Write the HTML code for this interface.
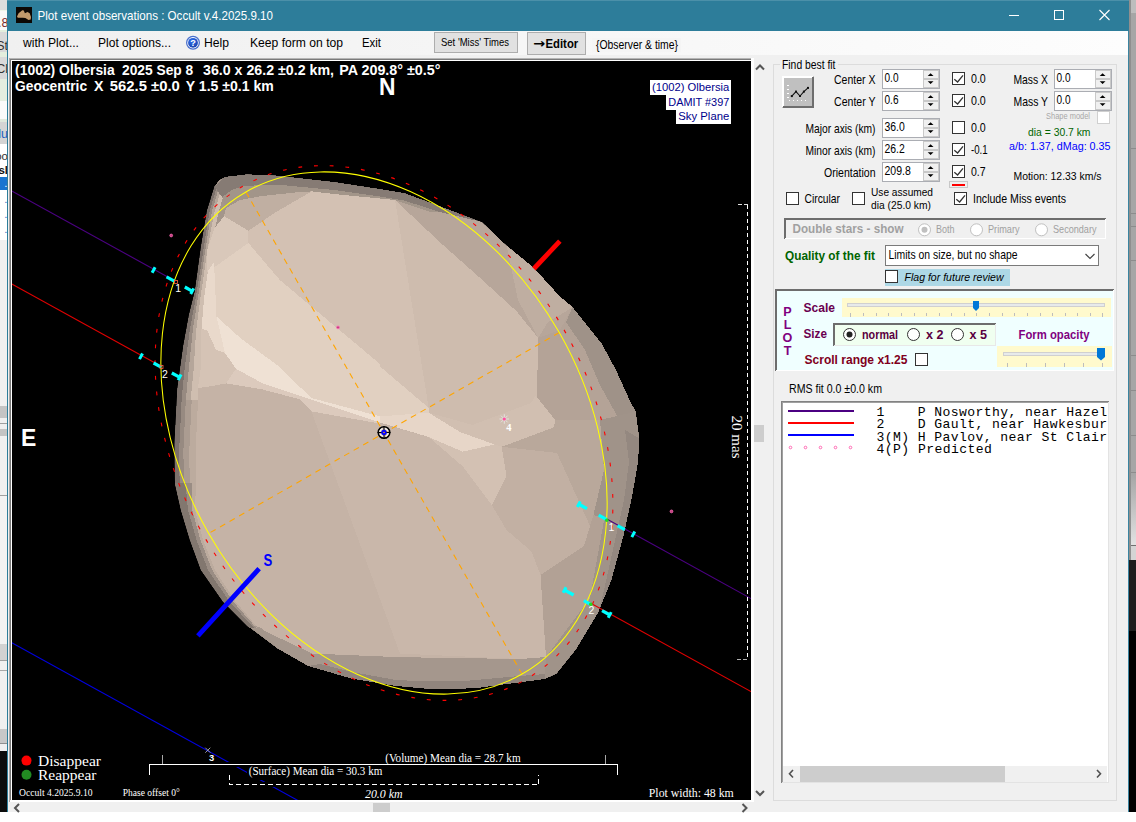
<!DOCTYPE html>
<html lang="en"><head><meta charset="utf-8"><title>Plot event observations : Occult v.4.2025.9.10</title>
<style>
html,body{margin:0;padding:0;background:#fff;overflow:hidden}
body{width:1136px;height:822px;position:relative;font-family:"Liberation Sans",sans-serif}
svg{position:absolute;left:0;top:0;display:block}
text{white-space:pre}
.c{shape-rendering:crispEdges}
</style></head><body>
<svg width="1136" height="822" viewBox="0 0 1136 822">
<rect x="0" y="0" width="1136" height="822" fill="#ffffff" class="c"/>
<rect x="0" y="0" width="8" height="812" fill="#e6e6e6" class="c"/>
<rect x="0" y="0" width="8" height="10" fill="#dddddd" class="c"/>
<rect x="0" y="10" width="8" height="1" fill="#eef5ea" class="c"/>
<rect x="0" y="11" width="8" height="19" fill="#f8f8f8" class="c"/>
<rect x="0" y="30" width="8" height="2" fill="#e3eedd" class="c"/>
<rect x="0" y="32" width="8" height="20" fill="#d9d9d9" class="c"/>
<rect x="0" y="52" width="8" height="5" fill="#e3eedd" class="c"/>
<rect x="0" y="57" width="8" height="22" fill="#d9d9d9" class="c"/>
<rect x="0" y="79" width="8" height="22" fill="#e4ede0" class="c"/>
<rect x="0" y="101" width="8" height="18" fill="#fafafa" class="c"/>
<rect x="0" y="119" width="8" height="3" fill="#dfe8dc" class="c"/>
<rect x="0" y="122" width="8" height="22" fill="#d4d4d4" class="c"/>
<rect x="0" y="144" width="8" height="33" fill="#ffffff" class="c"/>
<rect x="0" y="177" width="8" height="13" fill="#1874d0" class="c"/>
<rect x="0" y="190" width="8" height="50" fill="#ffffff" class="c"/>
<rect x="0" y="240" width="8" height="166" fill="#f0f0f0" class="c"/>
<rect x="0" y="406" width="8" height="12" fill="#c4c4c4" class="c"/>
<rect x="0" y="418" width="8" height="5" fill="#f0f0f0" class="c"/>
<rect x="0" y="423" width="8" height="1" fill="#a0a0a0" class="c"/>
<rect x="0" y="424" width="8" height="5" fill="#f0f0f0" class="c"/>
<rect x="0" y="429" width="8" height="7" fill="#c4c4c4" class="c"/>
<rect x="0" y="436" width="8" height="59" fill="#f0f0f0" class="c"/>
<rect x="0" y="495" width="8" height="1" fill="#a0a0a0" class="c"/>
<rect x="0" y="496" width="8" height="148" fill="#f2f2f2" class="c"/>
<rect x="0" y="644" width="8" height="16" fill="#d2d2d2" class="c"/>
<rect x="0" y="660" width="8" height="1" fill="#a0a0a0" class="c"/>
<rect x="0" y="661" width="8" height="9" fill="#f0f0f0" class="c"/>
<rect x="0" y="670" width="8" height="1" fill="#a8a8a8" class="c"/>
<rect x="0" y="671" width="8" height="58" fill="#f0f0f0" class="c"/>
<rect x="0" y="729" width="8" height="14" fill="#c8c8c8" class="c"/>
<rect x="0" y="743" width="8" height="1" fill="#909090" class="c"/>
<rect x="0" y="744" width="8" height="7" fill="#f0f0f0" class="c"/>
<rect x="0" y="751" width="8" height="61" fill="#0c0c0c" class="c"/>
<defs><clipPath id="lsclip"><rect x="0" y="0" width="7" height="812"/></clipPath></defs>
<g clip-path="url(#lsclip)">
<text x="8.5" y="27" font-size="12.5" fill="#7a2a2a" font-family='"Liberation Sans", sans-serif' text-anchor="end"  xml:space="preserve">3.8</text>
<text x="8" y="50" font-size="12.5" fill="#333" font-family='"Liberation Sans", sans-serif' text-anchor="end"  xml:space="preserve">St</text>
<text x="8" y="73" font-size="12.5" fill="#333" font-family='"Liberation Sans", sans-serif' text-anchor="end"  xml:space="preserve">Cl</text>
<text x="8" y="138" font-size="12.5" fill="#2060c0" font-family='"Liberation Sans", sans-serif' text-anchor="end"  xml:space="preserve">lu</text>
<text x="8" y="160" font-size="11.5" fill="#333" font-family='"Liberation Sans", sans-serif' text-anchor="end"  xml:space="preserve">oo</text>
<text x="8" y="174" font-size="11.5" fill="#111" font-family='"Liberation Sans", sans-serif' font-weight="bold" text-anchor="end"  xml:space="preserve">sl</text>
<text x="7.5" y="187" font-size="11.5" fill="#ffffff" font-family='"Liberation Sans", sans-serif' text-anchor="end"  xml:space="preserve">.</text>
<text x="7.5" y="203" font-size="11.5" fill="#3a6fc0" font-family='"Liberation Sans", sans-serif' text-anchor="end"  xml:space="preserve">.</text>
<text x="7.5" y="218" font-size="11.5" fill="#3a6fc0" font-family='"Liberation Sans", sans-serif' text-anchor="end"  xml:space="preserve">.</text>
<text x="7.5" y="233" font-size="11.5" fill="#3a6fc0" font-family='"Liberation Sans", sans-serif' text-anchor="end"  xml:space="preserve">.</text>
</g>
<defs><linearGradient id="rsg" x1="0" y1="0" x2="0" y2="1"><stop offset="0" stop-color="#a6a6a6"/><stop offset="1" stop-color="#e2e2e2"/></linearGradient><linearGradient id="msg" x1="0" y1="0" x2="1" y2="0"><stop offset="0" stop-color="#f0f0f0"/><stop offset="1" stop-color="#fdfdfd"/></linearGradient></defs>
<rect x="1128" y="0" width="8" height="475" fill="#a6a6a6" class="c"/>
<rect x="1128" y="0" width="8" height="13" fill="#bdbdbd" class="c"/>
<rect x="1128" y="475" width="8" height="70" fill="url(#rsg)" class="c"/>
<rect x="1128" y="545" width="8" height="1" fill="#707070" class="c"/>
<rect x="1128" y="546" width="8" height="14" fill="#d4d4d4" class="c"/>
<rect x="1128" y="560" width="8" height="71" fill="#1e1e1e" class="c"/>
<rect x="1128" y="631" width="8" height="181" fill="#000000" class="c"/>
<rect x="1129" y="148" width="7" height="1" fill="#8c8c8c" class="c"/>
<rect x="1129" y="213" width="7" height="1" fill="#8c8c8c" class="c"/>
<rect x="1129" y="226" width="7" height="1" fill="#8c8c8c" class="c"/>
<rect x="1129" y="260" width="7" height="1" fill="#8c8c8c" class="c"/>
<rect x="1129" y="355" width="7" height="1" fill="#8c8c8c" class="c"/>
<rect x="1129" y="390" width="7" height="1" fill="#8c8c8c" class="c"/>
<rect x="1129" y="435" width="7" height="1" fill="#8c8c8c" class="c"/>
<rect x="1129" y="472" width="7" height="1" fill="#8c8c8c" class="c"/>
<rect x="1129" y="0" width="2" height="560" fill="#8f8f8f" class="c"/>
<rect x="7" y="0" width="1121" height="812" fill="#f0f0f0" class="c"/>
<rect x="7" y="0" width="1122" height="31" fill="#2d7d9a" class="c"/>
<rect x="7" y="0" width="1122" height="1" fill="#4b90a9" class="c"/>
<rect x="7" y="31" width="1" height="781" fill="#2d7d9a" class="c"/>
<rect x="1128" y="31" width="1" height="781" fill="#3b84a0" class="c"/>
<rect x="8" y="31" width="1120" height="24" fill="url(#msg)" class="c"/>
<rect x="16" y="7" width="16" height="16" fill="#0c0804" class="c"/>
<path d="M17,16.4 L18.6,13.2 L22.3,10.3 L23.8,10.6 L24.9,13.2 L27.5,11.9 L29.7,13.2 L31,16.9 L30.7,19.5 L28.6,20.1 L25.4,18 L22.8,17.7 L20.1,17.7 L17.8,17.7 Z" fill="#c29b6c"/>
<text x="37.5" y="20" font-size="12.8" fill="#ffffff" font-family='"Liberation Sans", sans-serif' textLength="235.5" lengthAdjust="spacingAndGlyphs"  xml:space="preserve">Plot event observations : Occult v.4.2025.9.10</text>
<line x1="1009" y1="15.5" x2="1019" y2="15.5" stroke="#ffffff" stroke-width="1" class="c"/>
<rect x="1054.5" y="10.5" width="9" height="9" fill="none" stroke="#ffffff" stroke-width="1" class="c"/>
<path d="M1099.5,10 L1109.5,20 M1109.5,10 L1099.5,20" stroke="#ffffff" stroke-width="1.1" fill="none"/>
<text x="23" y="46.8" font-size="13.1" fill="#000" font-family='"Liberation Sans", sans-serif' textLength="56" lengthAdjust="spacingAndGlyphs"  xml:space="preserve">with Plot...</text>
<text x="98" y="46.8" font-size="13.1" fill="#000" font-family='"Liberation Sans", sans-serif' textLength="73" lengthAdjust="spacingAndGlyphs"  xml:space="preserve">Plot options...</text>
<defs><radialGradient id="hg" cx="0.4" cy="0.3" r="0.8"><stop offset="0" stop-color="#2f6fee"/><stop offset="1" stop-color="#1a3fa6"/></radialGradient></defs>
<circle cx="193" cy="42.8" r="7" fill="#4a70cc"/>
<circle cx="193" cy="42.8" r="5.7" fill="#ffffff"/>
<circle cx="193" cy="42.8" r="4.9" fill="url(#hg)"/>
<text x="193" y="46.3" font-size="9.2" fill="#ffffff" font-family='"Liberation Sans", sans-serif' font-weight="bold" text-anchor="middle"  xml:space="preserve">?</text>
<text x="204" y="46.8" font-size="13.1" fill="#000" font-family='"Liberation Sans", sans-serif' textLength="25" lengthAdjust="spacingAndGlyphs"  xml:space="preserve">Help</text>
<text x="250" y="46.8" font-size="13.1" fill="#000" font-family='"Liberation Sans", sans-serif' textLength="93" lengthAdjust="spacingAndGlyphs"  xml:space="preserve">Keep form on top</text>
<text x="362" y="46.8" font-size="13.1" fill="#000" font-family='"Liberation Sans", sans-serif' textLength="19" lengthAdjust="spacingAndGlyphs"  xml:space="preserve">Exit</text>
<rect x="434.5" y="32.5" width="83" height="20" fill="#e1e1e1" stroke="#adadad" stroke-width="1" class="c"/>
<text x="441" y="46" font-size="10.2" fill="#000" font-family='"Liberation Sans", sans-serif' textLength="68" lengthAdjust="spacingAndGlyphs"  xml:space="preserve">Set &#x27;Miss&#x27; Times</text>
<rect x="527.5" y="32.5" width="58" height="22" fill="#e1e1e1" stroke="#adadad" stroke-width="1" class="c"/>
<text y="48" font-size="13.4" font-weight="bold" fill="#000" font-family='"Liberation Sans", sans-serif'><tspan x="533" font-family='"DejaVu Sans", sans-serif' font-size="13" textLength="12" lengthAdjust="spacingAndGlyphs">→</tspan><tspan x="545.5" textLength="32.7" lengthAdjust="spacingAndGlyphs">Editor</tspan></text>
<rect x="592" y="38" width="89" height="14" fill="#f5f5f5" class="c"/>
<text x="596" y="48.5" font-size="12.6" fill="#000" font-family='"Liberation Sans", sans-serif' textLength="82" lengthAdjust="spacingAndGlyphs"  xml:space="preserve">{Observer &amp; time}</text>
<rect x="9" y="58" width="745" height="1" fill="#b4b4b4" class="c"/>
<rect x="9" y="59" width="745" height="1" fill="#7a7a7a" class="c"/>
<rect x="9" y="58" width="1" height="744" fill="#a8a8a8" class="c"/>
<rect x="10" y="59" width="1" height="743" fill="#7a7a7a" class="c"/>
<rect x="11" y="60" width="743" height="742" fill="#ffffff" class="c"/>
<rect x="12" y="61" width="739" height="739" fill="#000000" class="c"/>
<rect x="751" y="58" width="3" height="744" fill="#ffffff" class="c"/>
<rect x="10" y="800" width="744" height="2" fill="#ffffff" class="c"/>
<rect x="754" y="60" width="17" height="742" fill="#f0f0f0" class="c"/>
<rect x="754" y="425" width="10" height="17" fill="#cdcdcd" class="c"/>
<path d="M756,69.5 L760,65.5 L764,69.5" stroke="#555" stroke-width="2" fill="none"/>
<path d="M756,791 L760,795 L764,791" stroke="#555" stroke-width="2" fill="none"/>
<rect x="8" y="802" width="746" height="10" fill="#f0f0f0" class="c"/>
<rect x="373" y="803" width="17" height="9" fill="#cdcdcd" class="c"/>
<path d="M19,804 L15,808 L19,812" stroke="#555" stroke-width="2" fill="none"/>
<path d="M742.5,804 L746.5,808 L742.5,812" stroke="#555" stroke-width="2" fill="none"/>
<defs><clipPath id="plotclip"><rect x="12" y="61" width="739" height="739"/></clipPath></defs>
<g clip-path="url(#plotclip)">
<defs><clipPath id="silclip"><polygon points="214.5,186.5 219,180 225.4,176.8 247,174.3 276,175.5 334.4,182 380,189 404.3,193 440.8,206.5 482.2,222.3 506.5,245.4 533.3,267.3 560,296.5 572.5,307 601.7,343.5 616,370 629.6,400 635.7,411.6 639.4,438.4 638,462.7 632,496.8 623.5,535.7 611.4,580 598,613 576,649.5 556.5,673.8 545,679 522.5,682 473.8,688.4 430,689 396,686 352,678.7 308,666 276.5,648 247.3,626 223,601.6 201,570 190,540 181,510 175,483.5 174.5,444.6 177.4,388.7 183.5,345 189,315 195,291 201,247 207,211"/></clipPath></defs>
<g clip-path="url(#silclip)">
<polygon points="214.5,186.5 219,180 225.4,176.8 247,174.3 276,175.5 334.4,182 380,189 404.3,193 440.8,206.5 482.2,222.3 506.5,245.4 533.3,267.3 560,296.5 572.5,307 601.7,343.5 616,370 629.6,400 635.7,411.6 639.4,438.4 638,462.7 632,496.8 623.5,535.7 611.4,580 598,613 576,649.5 556.5,673.8 545,679 522.5,682 473.8,688.4 430,689 396,686 352,678.7 308,666 276.5,648 247.3,626 223,601.6 201,570 190,540 181,510 175,483.5 174.5,444.6 177.4,388.7 183.5,345 189,315 195,291 201,247 207,211" fill="#a4968b" class="c" />
<polygon points="211.1,186.5 203.4,211 200.9,231 197.7,256 195.0,271 190.3,297 182.0,330 173.7,369 170.7,400 168.1,450 168.7,483 176.8,510 186.1,540 196.8,570 219.4,601 247.6,628 251.8,628 225.6,601 204.1,570 192.9,540 184.1,510 179.6,483 179.2,450 181.6,400 184.6,369 189.8,330 195.9,297 200.2,271 202.5,256 206.3,231 209.6,211 217.0,186.5" fill="#7c716b" class="c" />
<polygon points="217.0,186.5 209.6,211 206.3,231 202.5,256 200.2,271 195.9,297 189.8,330 184.6,369 181.6,400 179.2,450 179.6,483 184.1,510 192.9,540 204.1,570 225.6,601 251.8,628 253.4,628 228.0,601 206.9,570 195.5,540 186.9,510 183.8,483 183.4,450 185.8,400 188.8,369 192.8,330 198.0,297 202.2,271 204.4,256 208.3,231 212.0,211 219.3,186.5" fill="#978a81" class="c" />
<polygon points="219.3,186.5 212.0,211 208.3,231 204.4,256 202.2,271 198.0,297 192.8,330 188.8,369 185.8,400 190.7,400 193.7,369 196.2,330 200.5,297 204.4,271 206.5,256 210.7,231 214.8,211 222.0,186.5" fill="#b5a69a" class="c" />
<polygon points="222.0,186.5 214.8,211 210.7,231 206.5,256 204.4,271 200.5,297 196.2,330 193.7,369 190.7,400 198.0,400 201.0,369 201.5,330 204.2,297 207.9,271 209.7,256 214.3,231 219.0,211 226.0,186.5" fill="#cfbeb0" class="c" />
<polygon points="185.8,400 183.4,450 183.8,483 186.9,510 195.5,540 206.9,570 228.0,601 253.4,628 255.6,628 231.4,601 210.8,570 199.1,540 190.8,510 189.7,483 189.3,450 191.7,400" fill="#ab9c91" class="c" />
<polygon points="191.7,400 189.3,450 189.7,483 190.8,510 199.1,540 210.8,570 231.4,601 255.6,628 258.0,628 235.0,601 215.0,570 203.0,540 195.0,510 196.0,483 195.7,450 198.0,400" fill="#bcab9e" class="c" />
<polygon points="168.7,483 176.8,510 186.1,540 196.8,570 219.4,601 247.6,628 254.0,628 229.0,601 208.0,570 196.5,540 188.0,510 185.5,483" fill="#82776f" class="c" />
<polygon points="185.5,483 188.0,510 196.5,540 208.0,570 229.0,601 254.0,628 256.4,628 232.6,601 212.2,570 200.4,540 192.2,510 191.8,483" fill="#9a8d84" class="c" />
<polygon points="214.5,186.5 225.4,176.8 247,174.3 276,175.5 334.4,182 380,189 404.3,193 440.8,206.5 482,222 470,222 440,212 404,200.5 380,196.5 334,190 276,184.5 243,186 232,190 222,197" fill="#867b74" class="c" />
<polygon points="222,197 232,190 243,186 276,184.5 334,190 380,196.5 404,200.5 440,212 430,212 395,200 334,194 300,192 262,196 240,200 226,208" fill="#a29589" class="c" />
<polygon points="226,208 240,200 262,196 300,192 311.7,191.4 276,212 248.4,230.8 224,216.2" fill="#c0afa2" class="c" />
<polygon points="224,216.2 248.4,230.8 248.4,243 207.3,272.2 207,250.3 214.3,228.4" fill="#d9c8ba" class="c" />
<polygon points="311.7,191.4 334,194 395,200 428.7,407.9 380,366.5 380,364 279.8,280 248.4,243 248.4,230.8 276,212" fill="#d3c1b3" class="c" />
<polygon points="395,200 440.8,243 484.6,282 516.3,311 538.2,337.9 536.9,398.2 530.9,403 472.5,424.9 428.7,412.7 428.7,407.9" fill="#cebcae" class="c" />
<polygon points="395,200 430,212 440,212 482,222 506.5,245.4 533.3,267.3 560,296.5 572.5,307 560,330 538.2,337.9 516.3,311 484.6,282 440.8,243" fill="#b7a69a" class="c" />
<polygon points="506.5,245.4 533.3,267.3 560,296.5 572.5,307 565,312 548,322 538.2,337.9 518,300" fill="#bfaea1" class="c" />
<polygon points="207.3,272.2 248.4,243 279.8,280 380,364 380,366.5 428.7,407.9 428.7,412.7 380,416.4 311.4,398 277.3,365.2 240.8,338.4 216.5,316.5 201.5,330 204.2,296.8 207.9,271.2" fill="#e1d0c1" class="c" />
<polygon points="207.9,271.2 214,262 216.5,316.5 225,353 216,350 203,340 201.3,331 204.2,296.8" fill="#e9d9cb" class="c" />
<polygon points="216.5,316.5 240.8,338.4 277.3,365.2 311.4,398 380,416.4 428.7,412.7 460.3,432.2 494.4,444.4 462.7,451.7 428.7,437 380,422.5 316.3,401.2 262.7,383.4 236,368.8 225,353" fill="#efe1d4" class="c" />
<polygon points="380,416.4 428.7,412.7 460.3,432.2 494.4,444.4 462.7,451.7 428.7,437 380,422.5" fill="#e7d6c8" class="c" />
<polygon points="201,345 201.5,329 207,330 216,350 225,353 236,368.8 226.2,383.4 206.8,387 198,388 200.5,370" fill="#d5c3b5" class="c" />
<polygon points="236,368.8 262.7,383.4 316.3,401.2 380,422.5 380,423.6 311.4,411.4 299.2,399.2 262.7,389.5 226.2,383.4" fill="#dccabd" class="c" />
<polygon points="198,388 206.8,387 226.2,383.4 262.7,389.5 299.2,399.2 311.4,411.4 380,423.6 380,422.5 428.7,437 462.7,466.3 492,505.2 506.5,530 531.4,551.4 540.5,575 546,657 520,659 400,657.2 312.5,653.6 258,628 235,601 215,570 203,540 195,510 196,483 195.7,450 198,400" fill="#c5b3a6" class="c" />
<polygon points="311.4,411.4 380,423.6 428.7,437 462.7,466.3 492,505.2 506.5,530 531.4,551.4 540.5,575 546,657 520,659 400,653.6" fill="#c9b7aa" class="c" />
<polygon points="472.5,424.9 530.9,403 535.7,395.7 555.2,420 554,427.3 501.7,446.8 494.4,444.4 460.3,432.2 428.7,412.7" fill="#d1bfb1" class="c" />
<polygon points="462.7,451.7 494.4,444.4 501.7,446.8 506.5,476 492,505.2 462.7,466.3 428.7,437" fill="#d3c1b3" class="c" />
<polygon points="538.2,337.9 560,330 572.5,307 601.7,343.5 616,370 629.6,400 635.7,411.6 600,420 555.2,420 535.7,395.7 536.9,398.2" fill="#b4a397" class="c" />
<polygon points="572.5,307 601.7,343.5 616,370 629.6,400 635.7,411.6 639.4,438.4 625,430 600,385 585,350 566,322" fill="#9f9288" class="c" />
<polygon points="501.7,446.8 554,427.3 555.2,420 600,420 604,470 593.4,515 590,526 557,453" fill="#b9a89b" class="c" />
<polygon points="501.7,446.8 557,453 590,526 584,546 540.5,575 531.4,551.4 506.5,530 492,505.2 506.5,476" fill="#c2b0a3" class="c" />
<polygon points="540.5,575 584,546 590,526 593.4,515 604.4,518.5 589.8,598.8 546,657" fill="#b2a195" class="c" />
<polygon points="600,420 635.7,411.6 639.4,438.4 638,462.7 632,496.8 623.5,535.7 611.4,580 598,613 576,649.5 556.5,673.8 545,679 546,657 589.8,598.8 604.4,518.5 593.4,515 604,470" fill="#a09389" class="c" />
<polygon points="625,430 639.4,438.4 638,462.7 632,496.8 623.5,535.7 611.4,580 598,613 604,590 614,545 624,500 629,462" fill="#948880" class="c" />
<polygon points="250.4,624.4 312.5,653.6 400,657.2 520,659 546,657 545,679 522.5,682 473.8,688.4 430,689 396,686 352,678.7 308,666 276.5,648 262,628" fill="#a5978d" class="c" />
<polygon points="308,666 352,678.7 396,686 430,689 473.8,688.4 522.5,682 545,679 545,674 520,676 470,680.5 430,681.5 396,680 352,672 320,664" fill="#91857d" class="c" />
</g>
<line x1="11" y1="190.52" x2="175.5" y2="281.24" stroke="#4b0082" stroke-width="1.1" />
<line x1="606.8" y1="519.1" x2="751" y2="598.63" stroke="#4b0082" stroke-width="1.1" />
<line x1="11" y1="283.52" x2="161.5" y2="366.52" stroke="#e00000" stroke-width="1.1" />
<line x1="590.8" y1="603.28" x2="751" y2="691.63" stroke="#e00000" stroke-width="1.1" />
<line x1="11" y1="642.28" x2="751" y2="1050.39" stroke="#0000e0" stroke-width="1.1" />
<line x1="245.9" y1="191.9" x2="522.1" y2="674.1" stroke="#ffa500" stroke-width="1.1" stroke-dasharray="6,5"/>
<line x1="559.3" y1="332.6" x2="208.7" y2="533.4" stroke="#ffa500" stroke-width="1.1" stroke-dasharray="6,5"/>
<ellipse cx="384" cy="433" rx="207.5" ry="284.3" transform="rotate(-29.8 384 433)" fill="none" stroke="#ff0000" stroke-width="1.1" stroke-dasharray="3.8,11.9"/>
<ellipse cx="384" cy="433" rx="202.0" ry="277.8" transform="rotate(-29.8 384 433)" fill="none" stroke="#ffff00" stroke-width="1.05"/>
<circle cx="384" cy="432.5" r="5.8" fill="none" stroke="#000" stroke-width="1.5"/>
<circle cx="384" cy="432.5" r="4.2" fill="none" stroke="#f4f4f4" stroke-width="1.3" stroke-dasharray="4.6,2"/>
<path d="M377.5,432.5 H390.5 M384,426 V439" stroke="#000" stroke-width="1"/>
<circle cx="384" cy="432.5" r="2.7" fill="#0000ff"/>
<circle cx="384" cy="432.5" r="0.8" fill="#ffa500"/>
<line x1="535.5" y1="267" x2="558.2" y2="242.8" stroke="#ff0000" stroke-width="4.8" stroke-linecap="square"/>
<line x1="199.5" y1="634" x2="257.5" y2="570.5" stroke="#0000ff" stroke-width="4.8" stroke-linecap="square"/>
<text x="263.4" y="566.2" font-size="17.4" fill="#0000ff" font-family='"Liberation Sans", sans-serif' font-weight="bold" textLength="8.8" lengthAdjust="spacingAndGlyphs"  xml:space="preserve">S</text>
<line x1="155.1" y1="267.2" x2="152.1" y2="272.8" stroke="#00ffff" stroke-width="3" />
<line x1="166.5" y1="276.8" x2="174.3" y2="281.1" stroke="#00ffff" stroke-width="3.2" />
<line x1="184.8" y1="287" x2="192.6" y2="291.3" stroke="#00ffff" stroke-width="3.2" />
<line x1="193.7" y1="288.4" x2="190.7" y2="294.0" stroke="#00ffff" stroke-width="3" />
<line x1="142.5" y1="353.5" x2="139.5" y2="359.1" stroke="#00ffff" stroke-width="3" />
<line x1="153.6" y1="363" x2="161.1" y2="367.1" stroke="#00ffff" stroke-width="3.2" />
<line x1="171.8" y1="373" x2="179.9" y2="377.4" stroke="#00ffff" stroke-width="3.2" />
<line x1="181.1" y1="374.5" x2="178.1" y2="380.1" stroke="#00ffff" stroke-width="3" />
<line x1="580.3" y1="501.4" x2="577.3" y2="507.0" stroke="#00ffff" stroke-width="3" />
<line x1="578.5" y1="504" x2="587" y2="508.7" stroke="#00ffff" stroke-width="3.2" />
<line x1="598.7" y1="515.2" x2="606.5" y2="519.5" stroke="#00ffff" stroke-width="3.2" />
<line x1="617.5" y1="525.6" x2="624.8" y2="529.6" stroke="#00ffff" stroke-width="3.2" />
<line x1="634.8" y1="531.5" x2="631.8" y2="537.1" stroke="#00ffff" stroke-width="3" />
<line x1="566.1" y1="587.2" x2="563.1" y2="592.8" stroke="#00ffff" stroke-width="3" />
<line x1="564.3" y1="589.9" x2="573.6" y2="595" stroke="#00ffff" stroke-width="3.2" />
<line x1="583.8" y1="600.6" x2="590.6" y2="604.3" stroke="#00ffff" stroke-width="3.2" />
<line x1="602" y1="610.6" x2="610" y2="615" stroke="#00ffff" stroke-width="3.2" />
<line x1="611.2" y1="612.1" x2="608.2" y2="617.7" stroke="#00ffff" stroke-width="3" />
<circle cx="606.8" cy="520.2" r="1.8" fill="#22dd22"/>
<circle cx="590.8" cy="604.2" r="1.8" fill="#22dd22"/>
<rect x="174.5" y="280.5" width="3" height="3" fill="none" stroke="#ff6040" stroke-width="0.8"/>
<rect x="160" y="365.5" width="3" height="3" fill="none" stroke="#ff6040" stroke-width="0.8"/>
<text x="175.2" y="291.6" font-size="10.5" fill="#fff" font-family='"Liberation Sans", sans-serif'  xml:space="preserve">1</text>
<text x="162" y="377.8" font-size="10.5" fill="#fff" font-family='"Liberation Sans", sans-serif'  xml:space="preserve">2</text>
<text x="608.5" y="530.5" font-size="10.5" fill="#fff" font-family='"Liberation Sans", sans-serif'  xml:space="preserve">1</text>
<text x="588.5" y="614" font-size="10.5" fill="#fff" font-family='"Liberation Sans", sans-serif'  xml:space="preserve">2</text>
<circle cx="171.2" cy="235.5" r="1.4" fill="#c04080" stroke="#ff69b4" stroke-width="0.8"/>
<circle cx="338" cy="327.4" r="1.4" fill="#c04080" stroke="#ff69b4" stroke-width="0.8"/>
<circle cx="671.5" cy="511.4" r="1.4" fill="#c04080" stroke="#ff69b4" stroke-width="0.8"/>
<path d="M499.5,419 H509 M504.3,414.2 V423.8 M501,415.7 L507.6,422.3 M507.6,415.7 L501,422.3" stroke="#e8e8e8" stroke-width="0.8"/>
<circle cx="504.3" cy="419" r="1.6" fill="#ff50a0"/>
<text x="506.3" y="430.5" font-size="10.5" fill="#fff" font-family='"Liberation Serif", serif' font-weight="bold"  xml:space="preserve">4</text>
<path d="M205.3,747.7 L210.3,752.7 M210.3,747.7 L205.3,752.7" stroke="#b0b0b0" stroke-width="0.9"/>
<text x="209" y="761.2" font-size="9.4" fill="#fff" font-family='"Liberation Sans", sans-serif' font-weight="bold"  xml:space="preserve">3</text>
<line x1="747.5" y1="205" x2="747.5" y2="660" stroke="#ffffff" stroke-width="1" stroke-dasharray="4.3,2.7" class="c"/>
<line x1="737.5" y1="204.5" x2="748" y2="204.5" stroke="#e0e0e0" stroke-width="1" stroke-dasharray="4,2" class="c"/>
<line x1="737" y1="659.5" x2="748" y2="659.5" stroke="#b0b0b0" stroke-width="1" stroke-dasharray="4,2" class="c"/>
<text transform="translate(732.2,415.5) rotate(90)" font-size="14.8" fill="#fff" font-family='"Liberation Serif", serif' textLength="43" lengthAdjust="spacingAndGlyphs">20 mas</text>
<text y="74.8" font-size="14.2" fill="#fff" font-family='"Liberation Sans", sans-serif' font-weight="bold" xml:space="preserve"><tspan x="15.1" textLength="99.6" lengthAdjust="spacingAndGlyphs">(1002) Olbersia</tspan><tspan> </tspan><tspan x="122" textLength="71.2" lengthAdjust="spacingAndGlyphs">2025 Sep 8</tspan><tspan> </tspan><tspan x="203" textLength="131" lengthAdjust="spacingAndGlyphs">36.0 x 26.2 ±0.2 km,</tspan><tspan> </tspan><tspan x="339.2" textLength="101.3" lengthAdjust="spacingAndGlyphs">PA 209.8° ±0.5°</tspan></text>
<text y="90.8" font-size="14.2" fill="#fff" font-family='"Liberation Sans", sans-serif' font-weight="bold" xml:space="preserve"><tspan x="15.1" textLength="72" lengthAdjust="spacingAndGlyphs">Geocentric</tspan><tspan> </tspan><tspan x="94" textLength="9.5" lengthAdjust="spacingAndGlyphs">X</tspan><tspan> </tspan><tspan x="109.8" textLength="70" lengthAdjust="spacingAndGlyphs">562.5 ±0.0</tspan><tspan> </tspan><tspan x="185.8" textLength="88" lengthAdjust="spacingAndGlyphs">Y 1.5 ±0.1 km</tspan></text>
<text x="379" y="95" font-size="23.6" fill="#fff" font-family='"Liberation Sans", sans-serif' font-weight="bold" textLength="16.5" lengthAdjust="spacingAndGlyphs"  xml:space="preserve">N</text>
<text x="21" y="446" font-size="24" fill="#fff" font-family='"Liberation Sans", sans-serif' font-weight="bold" textLength="15.3" lengthAdjust="spacingAndGlyphs"  xml:space="preserve">E</text>
<rect x="650" y="80" width="81" height="15" fill="#ffffff" class="c"/>
<rect x="666" y="95" width="65" height="15" fill="#ffffff" class="c"/>
<rect x="676" y="110" width="55" height="14" fill="#ffffff" class="c"/>
<text x="652" y="90.8" font-size="11.4" fill="#00008b" font-family='"Liberation Sans", sans-serif' textLength="77.3" lengthAdjust="spacingAndGlyphs"  xml:space="preserve">(1002) Olbersia</text>
<text x="668.3" y="105.8" font-size="11.4" fill="#00008b" font-family='"Liberation Sans", sans-serif' textLength="61" lengthAdjust="spacingAndGlyphs"  xml:space="preserve">DAMIT #397</text>
<text x="678.3" y="120.3" font-size="11.4" fill="#00008b" font-family='"Liberation Sans", sans-serif' textLength="51" lengthAdjust="spacingAndGlyphs"  xml:space="preserve">Sky Plane</text>
<circle cx="26.5" cy="760.6" r="5" fill="#ff0000"/>
<circle cx="26.5" cy="774.7" r="5" fill="#228b22"/>
<text x="38" y="765.6" font-size="15.4" fill="#fff" font-family='"Liberation Serif", serif' textLength="63" lengthAdjust="spacingAndGlyphs"  xml:space="preserve">Disappear</text>
<text x="38" y="779.7" font-size="15.4" fill="#fff" font-family='"Liberation Serif", serif' textLength="58.5" lengthAdjust="spacingAndGlyphs"  xml:space="preserve">Reappear</text>
<text x="19" y="796" font-size="10.7" fill="#fff" font-family='"Liberation Serif", serif' textLength="73.5" lengthAdjust="spacingAndGlyphs"  xml:space="preserve">Occult 4.2025.9.10</text>
<text x="122.8" y="796" font-size="10.7" fill="#fff" font-family='"Liberation Serif", serif' textLength="57" lengthAdjust="spacingAndGlyphs"  xml:space="preserve">Phase offset 0°</text>
<path d="M149.5,776 V764.5 H617.5 V776" stroke="#000" stroke-width="5" fill="none" class="c"/>
<path d="M149.5,774.5 V764.5 H617.5 V774.5" stroke="#fff" stroke-width="1" fill="none" class="c"/>
<line x1="162.5" y1="754.5" x2="162.5" y2="764" stroke="#a8a8a8" stroke-width="1.4" class="c"/>
<line x1="605.5" y1="754.5" x2="605.5" y2="764" stroke="#a8a8a8" stroke-width="1.4" class="c"/>
<text x="385.2" y="762" font-size="11.6" fill="#fff" font-family='"Liberation Serif", serif' textLength="135.5" lengthAdjust="spacingAndGlyphs"  xml:space="preserve">(Volume) Mean dia = 28.7 km</text>
<rect x="247" y="767" width="137" height="13" fill="#000" class="c"/>
<text x="248.7" y="775" font-size="11.6" fill="#fff" font-family='"Liberation Serif", serif' textLength="133.6" lengthAdjust="spacingAndGlyphs"  xml:space="preserve">(Surface) Mean dia = 30.3 km</text>
<path d="M229.5,773 V784.5 H538.5 V773" stroke="#000" stroke-width="5" fill="none" class="c"/>
<path d="M229.5,774.5 V784.5 H538.5 V774.5" stroke="#fff" stroke-width="1" fill="none" stroke-dasharray="5,3" class="c"/>
<text x="365" y="797.8" font-size="13.4" fill="#fff" font-family='"Liberation Serif", serif' font-style="italic" textLength="37.6" lengthAdjust="spacingAndGlyphs"  xml:space="preserve">20.0 km</text>
<text x="648.8" y="797.4" font-size="13.4" fill="#fff" font-family='"Liberation Serif", serif' textLength="85" lengthAdjust="spacingAndGlyphs"  xml:space="preserve">Plot width: 48 km</text>
</g>
<rect x="773.5" y="64.5" width="343" height="736" fill="none" stroke="#dcdcdc" stroke-width="1" class="c"/>
<rect x="780" y="58" width="58" height="13" fill="#f0f0f0" class="c"/>
<text x="782" y="69" font-size="12.2" fill="#000" font-family='"Liberation Sans", sans-serif' textLength="53.5" lengthAdjust="spacingAndGlyphs"  xml:space="preserve">Find best fit</text>
<rect x="782" y="76" width="32" height="32" fill="#c0c0c0" class="c"/>
<rect x="782" y="76" width="32" height="2" fill="#ffffff" class="c"/>
<rect x="782" y="76" width="2" height="32" fill="#ffffff" class="c"/>
<rect x="783" y="106" width="31" height="2" fill="#6e6e6e" class="c"/>
<rect x="812" y="77" width="2" height="31" fill="#6e6e6e" class="c"/>
<rect x="782" y="107" width="1" height="1" fill="#c0c0c0" class="c"/>
<rect x="813" y="76" width="1" height="1" fill="#c0c0c0" class="c"/>
<path d="M788,84.5 V99 M788.5,100.5 H808.5" stroke="#ffffff" stroke-width="1.4" fill="none" stroke-dasharray="1.4,2.6" class="c"/>
<path d="M791.8,96.1 L796,91.6 L800,96 L803.9,91.6 L808,87.9" stroke="#111" stroke-width="1.1" fill="none"/>
<rect x="790.8" y="95.1" width="2" height="2" fill="#111" />
<rect x="795" y="90.6" width="2" height="2" fill="#111" />
<rect x="799" y="95" width="2" height="2" fill="#111" />
<rect x="802.9" y="90.6" width="2" height="2" fill="#111" />
<rect x="807" y="86.9" width="2" height="2" fill="#111" />
<text x="834.0" y="83.5" font-size="12.2" fill="#000" font-family='"Liberation Sans", sans-serif' textLength="41.5" lengthAdjust="spacingAndGlyphs"  xml:space="preserve">Center X</text>
<rect x="882.5" y="69.5" width="57" height="19" fill="#ffffff" stroke="#abadb3" stroke-width="1" class="c"/>
<rect x="923" y="70" width="16" height="18" fill="#f0f0f0" class="c"/>
<rect x="923.5" y="70.5" width="15" height="8" fill="#f0f0f0" stroke="#c9c9c9" stroke-width="1" class="c"/>
<rect x="923.5" y="79.5" width="15" height="8" fill="#f0f0f0" stroke="#c9c9c9" stroke-width="1" class="c"/>
<path d="M927.7,76 L930.6,73.2 L933.5,76 Z" fill="#000"/>
<path d="M927.7,81.3 L930.6,84.1 L933.5,81.3 Z" fill="#000"/>
<text x="884.5" y="82.2" font-size="12" fill="#000" font-family='"Liberation Sans", sans-serif' textLength="14" lengthAdjust="spacingAndGlyphs"  xml:space="preserve">0.0</text>
<rect x="952.5" y="72.5" width="12" height="12" fill="#ffffff" stroke="#333333" stroke-width="1" class="c"/>
<path d="M954.3,79.2 L957.6,82 L963,75.3" stroke="#333" stroke-width="1.3" fill="none"/>
<text x="971" y="83.2" font-size="12.2" fill="#000" font-family='"Liberation Sans", sans-serif' textLength="14.8" lengthAdjust="spacingAndGlyphs"  xml:space="preserve">0.0</text>
<text x="834.0" y="105.5" font-size="12.2" fill="#000" font-family='"Liberation Sans", sans-serif' textLength="41.5" lengthAdjust="spacingAndGlyphs"  xml:space="preserve">Center Y</text>
<rect x="882.5" y="91.5" width="57" height="19" fill="#ffffff" stroke="#abadb3" stroke-width="1" class="c"/>
<rect x="923" y="92" width="16" height="18" fill="#f0f0f0" class="c"/>
<rect x="923.5" y="92.5" width="15" height="8" fill="#f0f0f0" stroke="#c9c9c9" stroke-width="1" class="c"/>
<rect x="923.5" y="101.5" width="15" height="8" fill="#f0f0f0" stroke="#c9c9c9" stroke-width="1" class="c"/>
<path d="M927.7,98 L930.6,95.2 L933.5,98 Z" fill="#000"/>
<path d="M927.7,103.3 L930.6,106.1 L933.5,103.3 Z" fill="#000"/>
<text x="884.5" y="104.2" font-size="12" fill="#000" font-family='"Liberation Sans", sans-serif' textLength="14" lengthAdjust="spacingAndGlyphs"  xml:space="preserve">0.6</text>
<rect x="952.5" y="94.5" width="12" height="12" fill="#ffffff" stroke="#333333" stroke-width="1" class="c"/>
<path d="M954.3,101.2 L957.6,104 L963,97.3" stroke="#333" stroke-width="1.3" fill="none"/>
<text x="971" y="105.2" font-size="12.2" fill="#000" font-family='"Liberation Sans", sans-serif' textLength="14.8" lengthAdjust="spacingAndGlyphs"  xml:space="preserve">0.0</text>
<text x="805.5" y="132.5" font-size="12.2" fill="#000" font-family='"Liberation Sans", sans-serif' textLength="70" lengthAdjust="spacingAndGlyphs"  xml:space="preserve">Major axis (km)</text>
<rect x="882.5" y="118.5" width="57" height="19" fill="#ffffff" stroke="#abadb3" stroke-width="1" class="c"/>
<rect x="923" y="119" width="16" height="18" fill="#f0f0f0" class="c"/>
<rect x="923.5" y="119.5" width="15" height="8" fill="#f0f0f0" stroke="#c9c9c9" stroke-width="1" class="c"/>
<rect x="923.5" y="128.5" width="15" height="8" fill="#f0f0f0" stroke="#c9c9c9" stroke-width="1" class="c"/>
<path d="M927.7,125 L930.6,122.2 L933.5,125 Z" fill="#000"/>
<path d="M927.7,130.3 L930.6,133.1 L933.5,130.3 Z" fill="#000"/>
<text x="884.5" y="131.2" font-size="12" fill="#000" font-family='"Liberation Sans", sans-serif' textLength="20.3" lengthAdjust="spacingAndGlyphs"  xml:space="preserve">36.0</text>
<rect x="952.5" y="121.5" width="12" height="12" fill="#ffffff" stroke="#333333" stroke-width="1" class="c"/>
<text x="971" y="132.2" font-size="12.2" fill="#000" font-family='"Liberation Sans", sans-serif' textLength="14.8" lengthAdjust="spacingAndGlyphs"  xml:space="preserve">0.0</text>
<text x="805.5" y="154.5" font-size="12.2" fill="#000" font-family='"Liberation Sans", sans-serif' textLength="70" lengthAdjust="spacingAndGlyphs"  xml:space="preserve">Minor axis (km)</text>
<rect x="882.5" y="140.5" width="57" height="19" fill="#ffffff" stroke="#abadb3" stroke-width="1" class="c"/>
<rect x="923" y="141" width="16" height="18" fill="#f0f0f0" class="c"/>
<rect x="923.5" y="141.5" width="15" height="8" fill="#f0f0f0" stroke="#c9c9c9" stroke-width="1" class="c"/>
<rect x="923.5" y="150.5" width="15" height="8" fill="#f0f0f0" stroke="#c9c9c9" stroke-width="1" class="c"/>
<path d="M927.7,147 L930.6,144.2 L933.5,147 Z" fill="#000"/>
<path d="M927.7,152.3 L930.6,155.1 L933.5,152.3 Z" fill="#000"/>
<text x="884.5" y="153.2" font-size="12" fill="#000" font-family='"Liberation Sans", sans-serif' textLength="20.3" lengthAdjust="spacingAndGlyphs"  xml:space="preserve">26.2</text>
<rect x="952.5" y="143.5" width="12" height="12" fill="#ffffff" stroke="#333333" stroke-width="1" class="c"/>
<path d="M954.3,150.2 L957.6,153 L963,146.3" stroke="#333" stroke-width="1.3" fill="none"/>
<text x="971" y="154.2" font-size="12.2" fill="#000" font-family='"Liberation Sans", sans-serif' textLength="16.7" lengthAdjust="spacingAndGlyphs"  xml:space="preserve">-0.1</text>
<text x="824.0" y="176.5" font-size="12.2" fill="#000" font-family='"Liberation Sans", sans-serif' textLength="51.5" lengthAdjust="spacingAndGlyphs"  xml:space="preserve">Orientation</text>
<rect x="882.5" y="162.5" width="57" height="19" fill="#ffffff" stroke="#abadb3" stroke-width="1" class="c"/>
<rect x="923" y="163" width="16" height="18" fill="#f0f0f0" class="c"/>
<rect x="923.5" y="163.5" width="15" height="8" fill="#f0f0f0" stroke="#c9c9c9" stroke-width="1" class="c"/>
<rect x="923.5" y="172.5" width="15" height="8" fill="#f0f0f0" stroke="#c9c9c9" stroke-width="1" class="c"/>
<path d="M927.7,169 L930.6,166.2 L933.5,169 Z" fill="#000"/>
<path d="M927.7,174.3 L930.6,177.1 L933.5,174.3 Z" fill="#000"/>
<text x="884.5" y="175.2" font-size="12" fill="#000" font-family='"Liberation Sans", sans-serif' textLength="26.3" lengthAdjust="spacingAndGlyphs"  xml:space="preserve">209.8</text>
<rect x="952.5" y="165.5" width="12" height="12" fill="#ffffff" stroke="#333333" stroke-width="1" class="c"/>
<path d="M954.3,172.2 L957.6,175 L963,168.3" stroke="#333" stroke-width="1.3" fill="none"/>
<text x="971" y="176.2" font-size="12.2" fill="#000" font-family='"Liberation Sans", sans-serif' textLength="14.6" lengthAdjust="spacingAndGlyphs"  xml:space="preserve">0.7</text>
<text x="1013.5" y="83.8" font-size="12.2" fill="#000" font-family='"Liberation Sans", sans-serif' textLength="34.5" lengthAdjust="spacingAndGlyphs"  xml:space="preserve">Mass X</text>
<text x="1013.5" y="105.8" font-size="12.2" fill="#000" font-family='"Liberation Sans", sans-serif' textLength="34.5" lengthAdjust="spacingAndGlyphs"  xml:space="preserve">Mass Y</text>
<rect x="1054.5" y="69.5" width="57" height="19" fill="#ffffff" stroke="#abadb3" stroke-width="1" class="c"/>
<rect x="1095" y="70" width="16" height="18" fill="#f0f0f0" class="c"/>
<rect x="1095.5" y="70.5" width="15" height="8" fill="#f0f0f0" stroke="#c9c9c9" stroke-width="1" class="c"/>
<rect x="1095.5" y="79.5" width="15" height="8" fill="#f0f0f0" stroke="#c9c9c9" stroke-width="1" class="c"/>
<path d="M1099.6999999999998,76 L1102.6,73.2 L1105.5,76 Z" fill="#000"/>
<path d="M1099.6999999999998,81.3 L1102.6,84.1 L1105.5,81.3 Z" fill="#000"/>
<text x="1056.5" y="82.2" font-size="12" fill="#000" font-family='"Liberation Sans", sans-serif' textLength="14" lengthAdjust="spacingAndGlyphs"  xml:space="preserve">0.0</text>
<rect x="1054.5" y="91.5" width="57" height="19" fill="#ffffff" stroke="#abadb3" stroke-width="1" class="c"/>
<rect x="1095" y="92" width="16" height="18" fill="#f0f0f0" class="c"/>
<rect x="1095.5" y="92.5" width="15" height="8" fill="#f0f0f0" stroke="#c9c9c9" stroke-width="1" class="c"/>
<rect x="1095.5" y="101.5" width="15" height="8" fill="#f0f0f0" stroke="#c9c9c9" stroke-width="1" class="c"/>
<path d="M1099.6999999999998,98 L1102.6,95.2 L1105.5,98 Z" fill="#000"/>
<path d="M1099.6999999999998,103.3 L1102.6,106.1 L1105.5,103.3 Z" fill="#000"/>
<text x="1056.5" y="104.2" font-size="12" fill="#000" font-family='"Liberation Sans", sans-serif' textLength="14" lengthAdjust="spacingAndGlyphs"  xml:space="preserve">0.0</text>
<text x="1046" y="119" font-size="8.6" fill="#a8a8a8" font-family='"Liberation Sans", sans-serif' textLength="44" lengthAdjust="spacingAndGlyphs"  xml:space="preserve">Shape model</text>
<rect x="1097.5" y="111.5" width="12" height="12" fill="#ffffff" stroke="#d0d0d0" stroke-width="1" class="c"/>
<text x="1028" y="135.8" font-size="11.6" fill="#006400" font-family='"Liberation Sans", sans-serif' textLength="62.5" lengthAdjust="spacingAndGlyphs"  xml:space="preserve">dia = 30.7 km</text>
<text x="1009" y="149.7" font-size="11.6" fill="#0000ff" font-family='"Liberation Sans", sans-serif' textLength="101.5" lengthAdjust="spacingAndGlyphs"  xml:space="preserve">a/b: 1.37, dMag: 0.35</text>
<text x="1013.5" y="179.7" font-size="11.6" fill="#000" font-family='"Liberation Sans", sans-serif' textLength="88" lengthAdjust="spacingAndGlyphs"  xml:space="preserve">Motion: 12.33 km/s</text>
<rect x="949.5" y="181.5" width="18" height="6" fill="#f0f0f0" stroke="#c8c8c8" stroke-width="1" class="c"/>
<rect x="952" y="184" width="13" height="2" fill="#ff0000" class="c"/>
<rect x="786.5" y="192.5" width="12" height="12" fill="#ffffff" stroke="#333333" stroke-width="1" class="c"/>
<text x="804.5" y="203" font-size="12.2" fill="#000" font-family='"Liberation Sans", sans-serif' textLength="35.5" lengthAdjust="spacingAndGlyphs"  xml:space="preserve">Circular</text>
<rect x="852.5" y="192.5" width="12" height="12" fill="#ffffff" stroke="#333333" stroke-width="1" class="c"/>
<text x="871" y="196.2" font-size="11.4" fill="#000" font-family='"Liberation Sans", sans-serif' textLength="62" lengthAdjust="spacingAndGlyphs"  xml:space="preserve">Use assumed</text>
<text x="871" y="208.8" font-size="11.4" fill="#000" font-family='"Liberation Sans", sans-serif' textLength="60" lengthAdjust="spacingAndGlyphs"  xml:space="preserve">dia (25.0 km)</text>
<rect x="954.5" y="192.5" width="12" height="12" fill="#ffffff" stroke="#333333" stroke-width="1" class="c"/>
<path d="M956.3,199.2 L959.6,202 L965,195.3" stroke="#333" stroke-width="1.3" fill="none"/>
<text x="973" y="202.6" font-size="12.2" fill="#000" font-family='"Liberation Sans", sans-serif' textLength="93" lengthAdjust="spacingAndGlyphs"  xml:space="preserve">Include Miss events</text>
<rect x="784" y="218" width="322" height="21" fill="#f0f0f0" class="c"/>
<rect x="784" y="218" width="322" height="2" fill="#6d6d6d" class="c"/>
<rect x="784" y="218" width="2" height="21" fill="#6d6d6d" class="c"/>
<rect x="785" y="238" width="321" height="1" fill="#ffffff" class="c"/>
<rect x="1105" y="219" width="1" height="20" fill="#ffffff" class="c"/>
<text x="792.5" y="232.8" font-size="12.6" fill="#a0a0a0" font-family='"Liberation Sans", sans-serif' font-weight="bold" textLength="111" lengthAdjust="spacingAndGlyphs"  xml:space="preserve">Double stars - show</text>
<circle cx="924.5" cy="229.8" r="6" fill="#fff" stroke="#c0c0c0" stroke-width="1"/>
<circle cx="924.5" cy="229.8" r="3" fill="#c0c0c0"/>
<text x="936" y="233.4" font-size="10.4" fill="#a0a0a0" font-family='"Liberation Sans", sans-serif' textLength="18.5" lengthAdjust="spacingAndGlyphs"  xml:space="preserve">Both</text>
<circle cx="976.5" cy="229.8" r="6" fill="#fff" stroke="#c0c0c0" stroke-width="1"/>
<text x="988" y="233.4" font-size="10.4" fill="#a0a0a0" font-family='"Liberation Sans", sans-serif' textLength="31.5" lengthAdjust="spacingAndGlyphs"  xml:space="preserve">Primary</text>
<circle cx="1041.5" cy="229.8" r="6" fill="#fff" stroke="#c0c0c0" stroke-width="1"/>
<text x="1053" y="233.4" font-size="10.4" fill="#a0a0a0" font-family='"Liberation Sans", sans-serif' textLength="43.5" lengthAdjust="spacingAndGlyphs"  xml:space="preserve">Secondary</text>
<text x="785" y="260" font-size="12.8" fill="#006400" font-family='"Liberation Sans", sans-serif' font-weight="bold" textLength="90" lengthAdjust="spacingAndGlyphs"  xml:space="preserve">Quality of the fit</text>
<rect x="885.5" y="245.5" width="213" height="20" fill="#ffffff" stroke="#7a7a7a" stroke-width="1" class="c"/>
<text x="888.5" y="258.8" font-size="12.2" fill="#000" font-family='"Liberation Sans", sans-serif' textLength="129" lengthAdjust="spacingAndGlyphs"  xml:space="preserve">Limits on size, but no shape</text>
<path d="M1085.5,254 L1090,258.5 L1094.5,254" stroke="#444" stroke-width="1.2" fill="none"/>
<rect x="885" y="269" width="125" height="17" fill="#add8e6" class="c"/>
<rect x="885.5" y="270.5" width="12" height="12" fill="#ffffff" stroke="#333333" stroke-width="1" class="c"/>
<text x="904.5" y="281" font-size="11.8" fill="#000" font-family='"Liberation Sans", sans-serif' font-style="italic" textLength="99" lengthAdjust="spacingAndGlyphs"  xml:space="preserve">Flag for future review</text>
<rect x="775" y="289" width="339" height="82" fill="#f0ffff" class="c"/>
<rect x="775" y="289" width="339" height="2" fill="#6d6d6d" class="c"/>
<rect x="775" y="289" width="2" height="82" fill="#6d6d6d" class="c"/>
<rect x="776" y="370" width="338" height="1" fill="#ffffff" class="c"/>
<rect x="1113" y="290" width="1" height="81" fill="#ffffff" class="c"/>
<text x="787.5" y="316" font-size="12.6" fill="#800080" font-family='"Liberation Sans", sans-serif' font-weight="bold" text-anchor="middle"  xml:space="preserve">P</text>
<text x="787.5" y="329" font-size="12.6" fill="#800080" font-family='"Liberation Sans", sans-serif' font-weight="bold" text-anchor="middle"  xml:space="preserve">L</text>
<text x="787.5" y="342" font-size="12.6" fill="#800080" font-family='"Liberation Sans", sans-serif' font-weight="bold" text-anchor="middle"  xml:space="preserve">O</text>
<text x="787.5" y="355" font-size="12.6" fill="#800080" font-family='"Liberation Sans", sans-serif' font-weight="bold" text-anchor="middle"  xml:space="preserve">T</text>
<text x="803.5" y="311.6" font-size="13" fill="#6a0050" font-family='"Liberation Sans", sans-serif' font-weight="bold" textLength="31.5" lengthAdjust="spacingAndGlyphs"  xml:space="preserve">Scale</text>
<text x="803.5" y="337.6" font-size="13" fill="#6a0050" font-family='"Liberation Sans", sans-serif' font-weight="bold" textLength="23.5" lengthAdjust="spacingAndGlyphs"  xml:space="preserve">Size</text>
<text x="804.5" y="363.6" font-size="13" fill="#800020" font-family='"Liberation Sans", sans-serif' font-weight="bold" textLength="103" lengthAdjust="spacingAndGlyphs"  xml:space="preserve">Scroll range x1.25</text>
<rect x="915.5" y="353.5" width="12" height="12" fill="#ffffff" stroke="#333333" stroke-width="1" class="c"/>
<rect x="842" y="298" width="269" height="19" fill="#fffacd" class="c"/>
<rect x="847.5" y="303.5" width="257" height="3" fill="#e7eaea" stroke="#d0d0d0" stroke-width="1" class="c"/>
<line x1="850.5" y1="313" x2="850.5" y2="317" stroke="#bdbdbd" stroke-width="1" class="c"/>
<line x1="863.5" y1="313" x2="863.5" y2="316" stroke="#bdbdbd" stroke-width="1" class="c"/>
<line x1="876.5" y1="313" x2="876.5" y2="316" stroke="#bdbdbd" stroke-width="1" class="c"/>
<line x1="888.5" y1="313" x2="888.5" y2="316" stroke="#bdbdbd" stroke-width="1" class="c"/>
<line x1="901.5" y1="313" x2="901.5" y2="316" stroke="#bdbdbd" stroke-width="1" class="c"/>
<line x1="914.5" y1="313" x2="914.5" y2="316" stroke="#bdbdbd" stroke-width="1" class="c"/>
<line x1="926.5" y1="313" x2="926.5" y2="316" stroke="#bdbdbd" stroke-width="1" class="c"/>
<line x1="939.5" y1="313" x2="939.5" y2="316" stroke="#bdbdbd" stroke-width="1" class="c"/>
<line x1="951.5" y1="313" x2="951.5" y2="316" stroke="#bdbdbd" stroke-width="1" class="c"/>
<line x1="964.5" y1="313" x2="964.5" y2="316" stroke="#bdbdbd" stroke-width="1" class="c"/>
<line x1="976.5" y1="313" x2="976.5" y2="316" stroke="#bdbdbd" stroke-width="1" class="c"/>
<line x1="989.5" y1="313" x2="989.5" y2="316" stroke="#bdbdbd" stroke-width="1" class="c"/>
<line x1="1002.5" y1="313" x2="1002.5" y2="316" stroke="#bdbdbd" stroke-width="1" class="c"/>
<line x1="1014.5" y1="313" x2="1014.5" y2="316" stroke="#bdbdbd" stroke-width="1" class="c"/>
<line x1="1027.5" y1="313" x2="1027.5" y2="316" stroke="#bdbdbd" stroke-width="1" class="c"/>
<line x1="1040.5" y1="313" x2="1040.5" y2="316" stroke="#bdbdbd" stroke-width="1" class="c"/>
<line x1="1052.5" y1="313" x2="1052.5" y2="316" stroke="#bdbdbd" stroke-width="1" class="c"/>
<line x1="1065.5" y1="313" x2="1065.5" y2="316" stroke="#bdbdbd" stroke-width="1" class="c"/>
<line x1="1077.5" y1="313" x2="1077.5" y2="316" stroke="#bdbdbd" stroke-width="1" class="c"/>
<line x1="1090.5" y1="313" x2="1090.5" y2="316" stroke="#bdbdbd" stroke-width="1" class="c"/>
<line x1="1102.5" y1="313" x2="1102.5" y2="317" stroke="#bdbdbd" stroke-width="1" class="c"/>
<path d="M973,301 H979 V308 L976,311 L973,308 Z" fill="#0078d7"/>
<rect x="833" y="323" width="163" height="23" fill="#f0fff0" class="c"/>
<rect x="833" y="323" width="163" height="2" fill="#6d6d6d" class="c"/>
<rect x="833" y="323" width="2" height="23" fill="#6d6d6d" class="c"/>
<rect x="834" y="345" width="162" height="1" fill="#e8e8e8" class="c"/>
<rect x="995" y="324" width="1" height="22" fill="#e8e8e8" class="c"/>
<circle cx="849.5" cy="334.5" r="6" fill="#fff" stroke="#333333" stroke-width="1"/>
<circle cx="849.5" cy="334.5" r="3" fill="#222"/>
<text x="862" y="338.5" font-size="12.6" fill="#5a0040" font-family='"Liberation Sans", sans-serif' font-weight="bold" textLength="36" lengthAdjust="spacingAndGlyphs"  xml:space="preserve">normal</text>
<circle cx="913.5" cy="334.5" r="6" fill="#fff" stroke="#333333" stroke-width="1"/>
<text x="926" y="338.5" font-size="12.6" fill="#5a0040" font-family='"Liberation Sans", sans-serif' font-weight="bold" textLength="17.5" lengthAdjust="spacingAndGlyphs"  xml:space="preserve">x 2</text>
<circle cx="957.5" cy="334.5" r="6" fill="#fff" stroke="#333333" stroke-width="1"/>
<text x="969.5" y="338.5" font-size="12.6" fill="#5a0040" font-family='"Liberation Sans", sans-serif' font-weight="bold" textLength="17.5" lengthAdjust="spacingAndGlyphs"  xml:space="preserve">x 5</text>
<text x="1018.5" y="338.7" font-size="12.6" fill="#800080" font-family='"Liberation Sans", sans-serif' font-weight="bold" textLength="71" lengthAdjust="spacingAndGlyphs"  xml:space="preserve">Form opacity</text>
<rect x="997" y="346" width="115" height="21" fill="#fffacd" class="c"/>
<rect x="1003.5" y="352.5" width="100" height="3" fill="#e7eaea" stroke="#d0d0d0" stroke-width="1" class="c"/>
<line x1="1007.5" y1="363" x2="1007.5" y2="367" stroke="#bdbdbd" stroke-width="1" class="c"/>
<line x1="1026.5" y1="363" x2="1026.5" y2="367" stroke="#bdbdbd" stroke-width="1" class="c"/>
<line x1="1045.5" y1="363" x2="1045.5" y2="367" stroke="#bdbdbd" stroke-width="1" class="c"/>
<line x1="1064.5" y1="363" x2="1064.5" y2="367" stroke="#bdbdbd" stroke-width="1" class="c"/>
<line x1="1083.5" y1="363" x2="1083.5" y2="367" stroke="#bdbdbd" stroke-width="1" class="c"/>
<line x1="1102.5" y1="363" x2="1102.5" y2="367" stroke="#bdbdbd" stroke-width="1" class="c"/>
<path d="M1097,348 H1105 V357 L1101,360.5 L1097,357 Z" fill="#0078d7"/>
<text x="789" y="392.6" font-size="12.2" fill="#000" font-family='"Liberation Sans", sans-serif' textLength="93" lengthAdjust="spacingAndGlyphs"  xml:space="preserve">RMS fit 0.0 ±0.0 km</text>
<rect x="782" y="402" width="326" height="381" fill="#ffffff" class="c"/>
<rect x="781" y="401" width="328" height="1" fill="#828282" class="c"/>
<rect x="781" y="401" width="1" height="382" fill="#828282" class="c"/>
<rect x="782" y="402" width="326" height="1" fill="#a0a0a0" class="c"/>
<rect x="782" y="402" width="1" height="380" fill="#a0a0a0" class="c"/>
<rect x="1108" y="402" width="1" height="381" fill="#e3e3e3" class="c"/>
<rect x="782" y="782" width="327" height="1" fill="#e3e3e3" class="c"/>
<line x1="788" y1="410.8" x2="854" y2="410.8" stroke="#4b0082" stroke-width="2" class="c"/>
<line x1="788" y1="422.8" x2="854" y2="422.8" stroke="#ff0000" stroke-width="2" class="c"/>
<line x1="788" y1="435" x2="854" y2="435" stroke="#0000ff" stroke-width="2" class="c"/>
<circle cx="790.5" cy="447.5" r="1.3" fill="none" stroke="#ff69b4" stroke-width="1"/>
<circle cx="805.5" cy="447.5" r="1.3" fill="none" stroke="#ff69b4" stroke-width="1"/>
<circle cx="820.5" cy="447.5" r="1.3" fill="none" stroke="#ff69b4" stroke-width="1"/>
<circle cx="835.5" cy="447.5" r="1.3" fill="none" stroke="#ff69b4" stroke-width="1"/>
<circle cx="850.5" cy="447.5" r="1.3" fill="none" stroke="#ff69b4" stroke-width="1"/>
<defs><clipPath id="lbclip"><rect x="783" y="403" width="324" height="362"/></clipPath></defs>
<g clip-path="url(#lbclip)">
<text x="876.6" y="416.3" font-size="13.1" fill="#000" font-family='"Liberation Mono", monospace' textLength="271.6" lengthAdjust="spacing"  xml:space="preserve">1    P Nosworthy, near Hazelbrook</text>
<text x="876.6" y="428.40000000000003" font-size="13.1" fill="#000" font-family='"Liberation Mono", monospace' textLength="238.7" lengthAdjust="spacing"  xml:space="preserve">2    D Gault, near Hawkesbury</text>
<text x="876.6" y="440.5" font-size="13.1" fill="#000" font-family='"Liberation Mono", monospace' textLength="230.4" lengthAdjust="spacing"  xml:space="preserve">3(M) H Pavlov, near St Clair</text>
<text x="876.6" y="452.6" font-size="13.1" fill="#000" font-family='"Liberation Mono", monospace' textLength="115.2" lengthAdjust="spacing"  xml:space="preserve">4(P) Predicted</text>
</g>
<rect x="783" y="766" width="324" height="16" fill="#f0f0f0" class="c"/>
<rect x="800" y="766" width="205" height="16" fill="#cdcdcd" class="c"/>
<path d="M793,770 L789.5,773.8 L793,777.5" stroke="#505050" stroke-width="1.6" fill="none"/>
<path d="M1097,770 L1100.5,773.8 L1097,777.5" stroke="#505050" stroke-width="1.6" fill="none"/>
</svg>
</body></html>
